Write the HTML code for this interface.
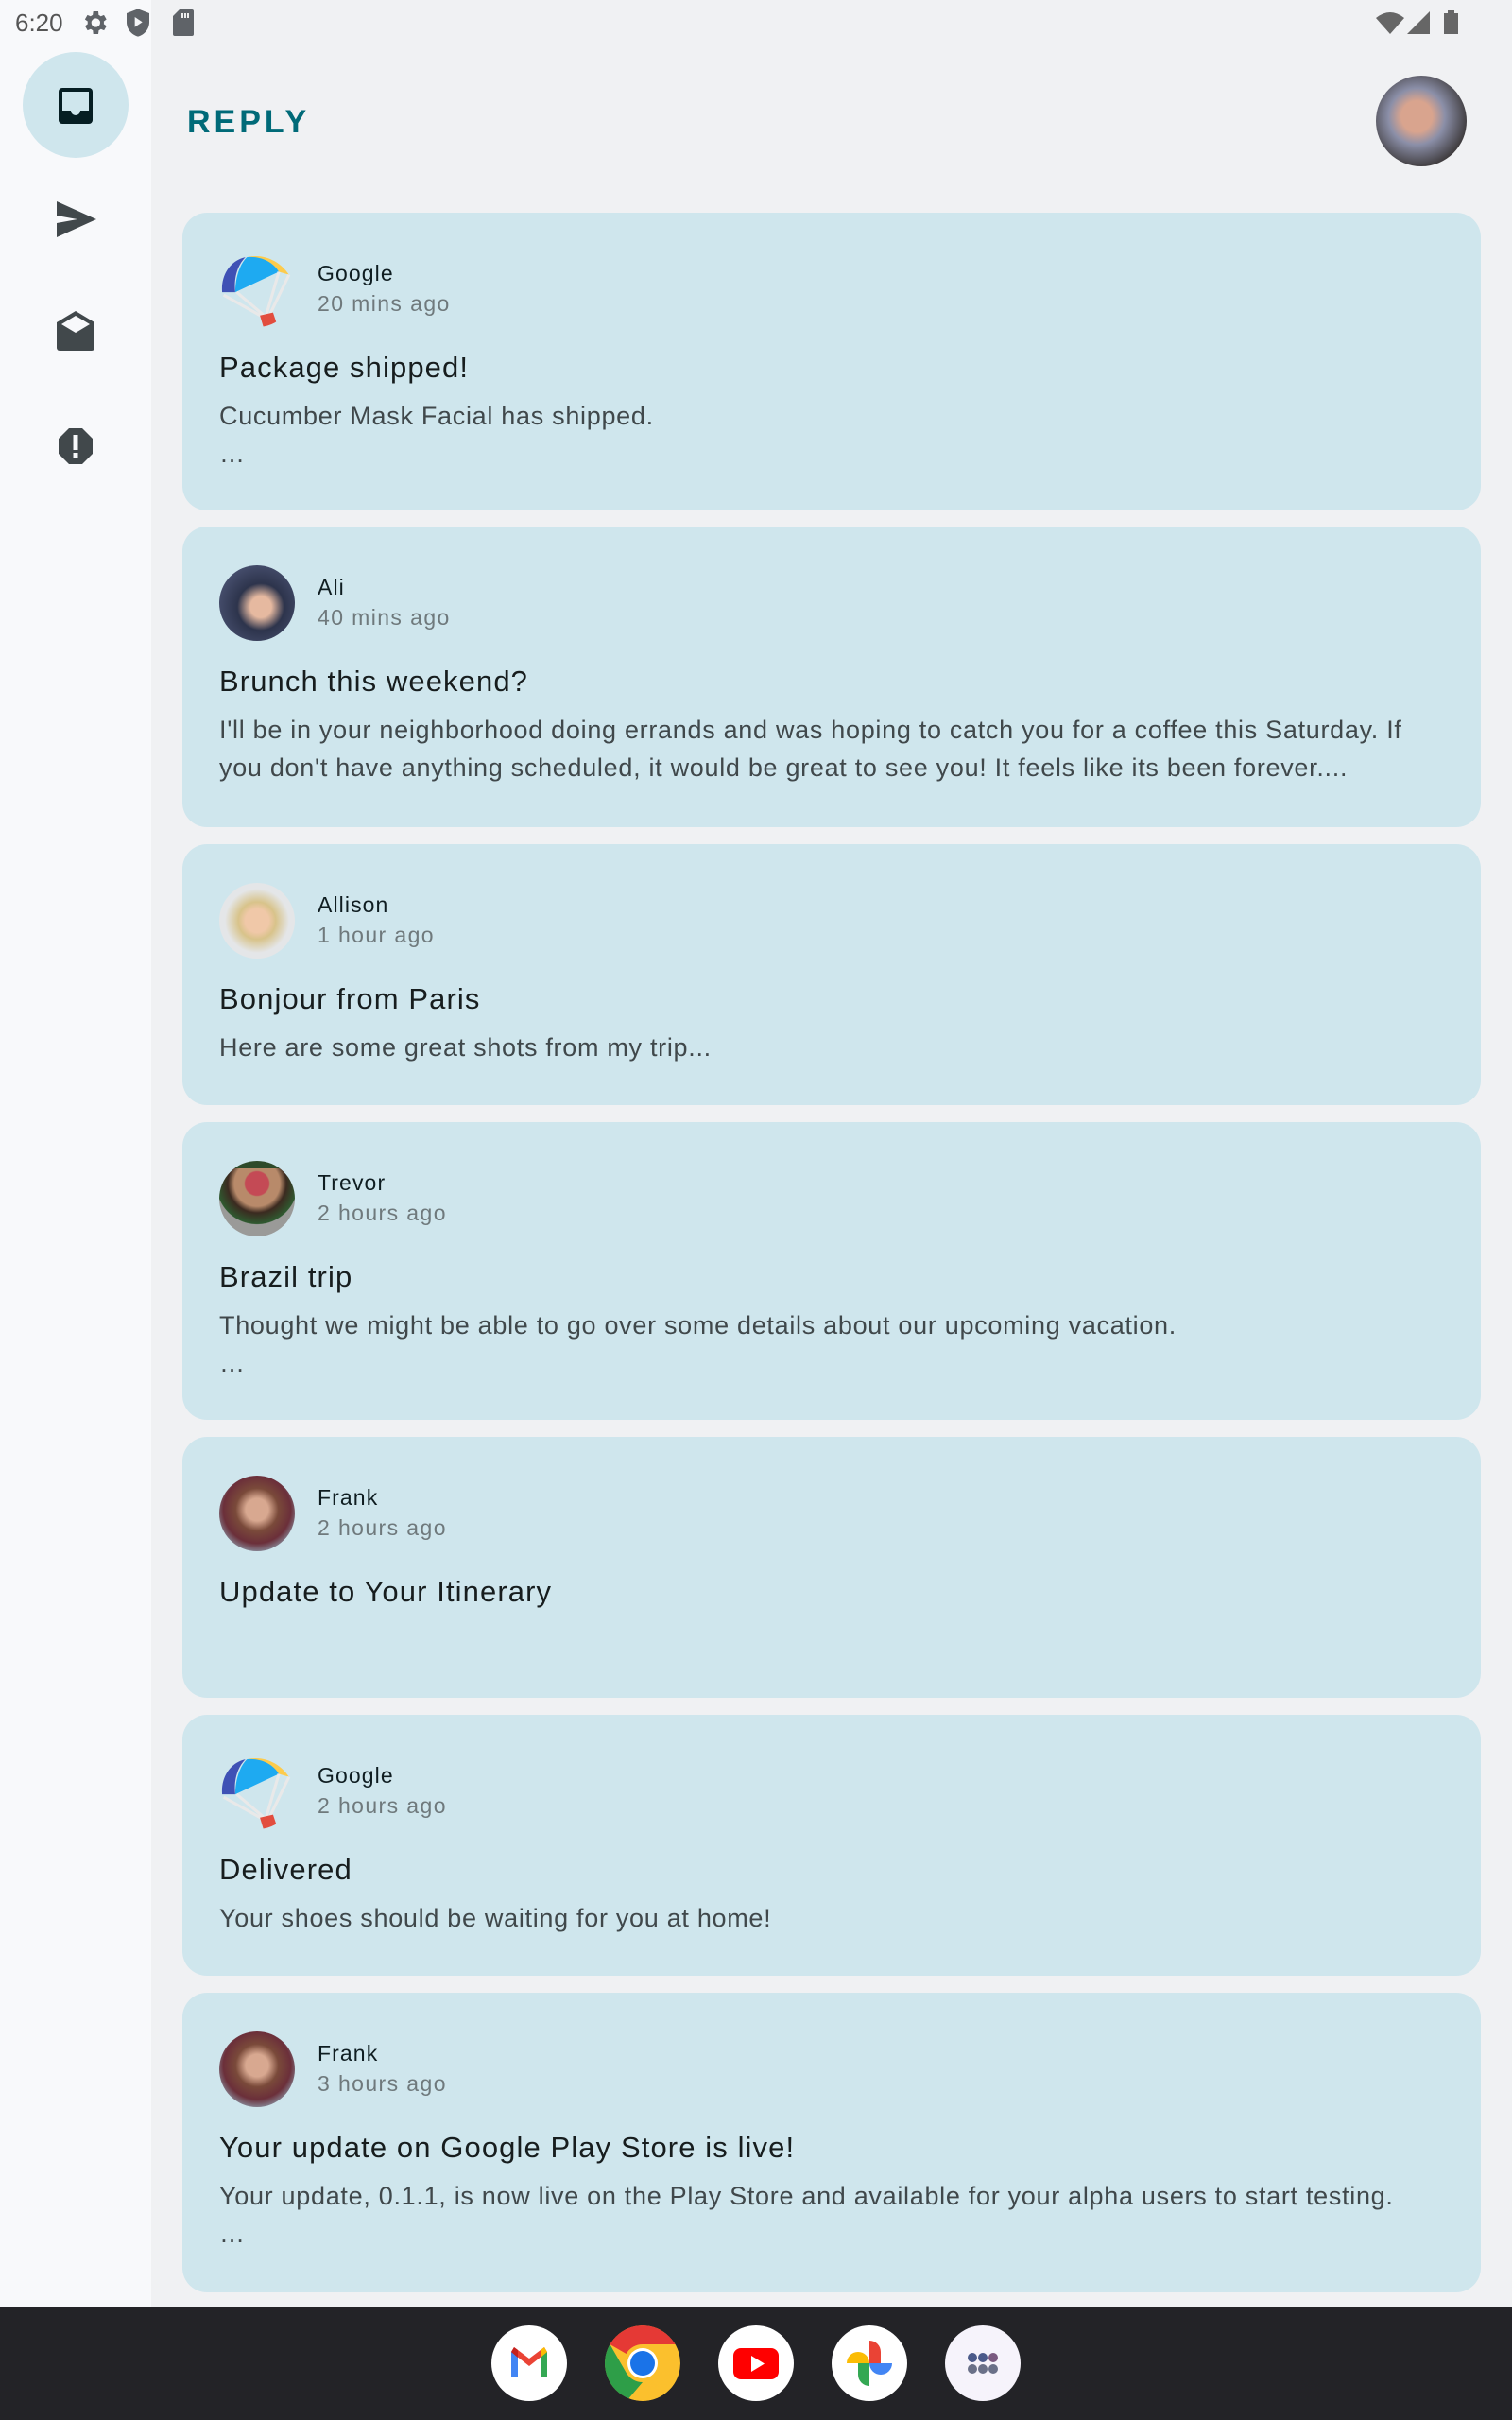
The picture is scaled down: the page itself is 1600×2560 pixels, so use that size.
<!DOCTYPE html>
<html><head><meta charset="utf-8">
<style>
*{margin:0;padding:0;box-sizing:border-box}
body{width:1600px;height:2560px;background:#f0f1f3;font-family:"Liberation Sans",sans-serif;position:relative;overflow:hidden}
.rail{position:absolute;left:0;top:0;width:160px;height:2440px;background:#f8f9fb}
.abs{position:absolute}
.card{position:absolute;left:193px;width:1374px;background:#cfe6ed;border-radius:26px}
.av{position:absolute;left:39px;top:41px;width:80px;height:80px;border-radius:50%;overflow:hidden}
.nm{position:absolute;left:143px;top:52px;font-size:23px;line-height:24px;color:#0f1d21;letter-spacing:1.1px}
.tm{position:absolute;left:143px;top:84px;font-size:23px;line-height:24px;color:#6f797c;letter-spacing:1.4px}
.sb{position:absolute;left:39px;top:148px;font-size:31px;line-height:31px;color:#171d1e;letter-spacing:1.1px;white-space:nowrap}
.bd{position:absolute;left:39px;top:195px;font-size:27px;line-height:40px;color:#40484b;white-space:nowrap;letter-spacing:0.7px}
.dock{position:absolute;left:0;top:2440px;width:1600px;height:120px;background:#232327}
.di{position:absolute;top:20px;width:80px;height:80px;border-radius:50%;background:#fff;overflow:hidden}
</style></head><body>
<div class="rail"></div>
<!-- status bar -->
<div class="abs" style="left:16px;top:9px;font-size:26px;color:#555;">6:20</div>
<svg class="abs" style="left:84px;top:8px" width="32" height="32" viewBox="0 0 24 24"><path fill="#5f6368" d="M19.4 13a7.5 7.5 0 0 0 0-2l2.1-1.6-2-3.5-2.5 1a7 7 0 0 0-1.7-1L15 3h-4l-.4 2.9a7 7 0 0 0-1.7 1l-2.5-1-2 3.5L6.6 11a7.5 7.5 0 0 0 0 2l-2.1 1.6 2 3.5 2.5-1a7 7 0 0 0 1.7 1L11 21h4l.4-2.9a7 7 0 0 0 1.7-1l2.5 1 2-3.5zM13 15.5a3.5 3.5 0 1 1 0-7 3.5 3.5 0 0 1 0 7z"/></svg>
<svg class="abs" style="left:132px;top:8px" width="28" height="32" viewBox="0 0 20 24"><path fill="#5f6368" d="M10 1 1 4.5v7c0 5.5 3.8 10 9 11.5 5.2-1.5 9-6 9-11.5v-7z"/><path fill="#f4f5f7" d="M7.5 7.5v8l6-4z"/></svg>
<svg class="abs" style="left:183px;top:10px" width="22" height="28" viewBox="0 0 22 28"><path fill="#5f6368" d="M7 0h13a2 2 0 0 1 2 2v24a2 2 0 0 1-2 2H2a2 2 0 0 1-2-2V7z"/><path fill="#eee" d="M9 4h2v5H9zM12 4h2v5h-2zM15 4h2v5h-2z"/></svg>
<svg class="abs" style="left:1456px;top:12px" width="30" height="24" viewBox="0 0 30 24"><path fill="#666" d="M0 7Q15-5 30 7L15 24z"/></svg>
<svg class="abs" style="left:1489px;top:12px" width="24" height="24" viewBox="0 0 24 24"><path fill="#666" d="M24 0v24H0z"/></svg>
<svg class="abs" style="left:1528px;top:11px" width="15" height="25" viewBox="0 0 15 25"><path fill="#666" d="M4 0h7v3h4v22H0V3h4z"/></svg>

<!-- nav rail -->
<div class="abs" style="left:24px;top:55px;width:112px;height:112px;border-radius:50%;background:#cfe6ed"></div>
<svg class="abs" style="left:62px;top:93px" width="36" height="38" viewBox="0 0 36 38"><rect x="0" y="0" width="36" height="38" rx="4" fill="#061e23"/><path fill="#cfe6ed" d="M4 4h28v20h-9a5 5 0 0 1-10 0H4z"/></svg>
<svg class="abs" style="left:60px;top:213px" width="42" height="38" viewBox="0 0 42 38"><path fill="#41484b" d="M0 0 42 19 0 38V23l22-4L0 15z"/></svg>
<svg class="abs" style="left:60px;top:329px" width="40" height="42" viewBox="0 0 40 42"><path fill="#41484b" d="M20 0 40 12v27a3 3 0 0 1-3 3H3a3 3 0 0 1-3-3V12z"/><path fill="#f8f9fb" d="M20 5 35 14 20 23 5 14z"/></svg>
<svg class="abs" style="left:62px;top:453px" width="36" height="38" viewBox="0 0 36 38"><path fill="#41484b" d="M11 0h14l11 11v16L25 38H11L0 27V11z"/><rect x="15.5" y="7" width="5" height="16" fill="#f8f9fb"/><rect x="15.5" y="26" width="5" height="5" fill="#f8f9fb"/></svg>

<!-- header -->
<div class="abs" style="left:198px;top:110px;font-size:34px;font-weight:bold;letter-spacing:4px;color:#006a78">REPLY</div>
<div class="abs" style="left:1456px;top:80px;width:96px;height:96px;border-radius:50%;background:radial-gradient(circle at 45% 45%,#d9a48e 0 22%,#8b8fa8 40%,#3a3636 75%)"></div>

<!-- cards -->
<div class="card" style="top:225px;height:315px">
 <div class="av" style="background:none"><svg width="80" height="80" viewBox="10 10 52 52"><path fill="#3f51b5" d="M12 38c-1-12 6-22 16-24-6 6-8 15-7 24z"/><path fill="#1eaaf1" d="M21 38c0-10 3-19 8-24 10-2 19 3 22 10z"/><path fill="#fdcb4c" d="M29 14c12-3 23 3 29 12l-7-2c-4-7-13-11-22-10z"/><path stroke="#e9e9e9" stroke-width="2" fill="none" d="M13 40 40 55M22 38 42 55M51 24 42 55M58 26 44 55"/><path fill="#e24d3e" d="M38 54l9-2 3 9-9 3z"/></svg></div>
 <div class="nm">Google</div><div class="tm">20 mins ago</div>
 <div class="sb">Package shipped!</div>
 <div class="bd">Cucumber Mask Facial has shipped.<br>…</div>
</div>
<div class="card" style="top:557px;height:318px">
 <div class="av" style="background:radial-gradient(circle at 55% 55%,#e6b9a0 0 18%,#2d344c 40%,#4a5272 80%)"></div>
 <div class="nm">Ali</div><div class="tm">40 mins ago</div>
 <div class="sb">Brunch this weekend?</div>
 <div class="bd">I'll be in your neighborhood doing errands and was hoping to catch you for a coffee this Saturday. If<br>you don't have anything scheduled, it would be great to see you! It feels like its been forever....</div>
</div>
<div class="card" style="top:893px;height:276px">
 <div class="av" style="background:radial-gradient(circle at 50% 50%,#f0c8a8 0 22%,#d8c38a 35%,#e4e6e8 60%)"></div>
 <div class="nm">Allison</div><div class="tm">1 hour ago</div>
 <div class="sb">Bonjour from Paris</div>
 <div class="bd">Here are some great shots from my trip...</div>
</div>
<div class="card" style="top:1187px;height:315px">
 <div class="av" style="background:linear-gradient(#2e4a2a 0 10%,transparent 10%),radial-gradient(circle at 50% 30%,#c44a55 0 18%,#b88a6a 20% 35%,#3b2a20 45%,#2f5a30 62%,#9a9a98 63%)"></div>
 <div class="nm">Trevor</div><div class="tm">2 hours ago</div>
 <div class="sb">Brazil trip</div>
 <div class="bd">Thought we might be able to go over some details about our upcoming vacation.<br>…</div>
</div>
<div class="card" style="top:1520px;height:276px">
 <div class="av" style="background:radial-gradient(circle at 50% 45%,#d8a890 0 20%,#7a4a3a 38%,#6b2f3a 60%,#8ea0b0 80%)"></div>
 <div class="nm">Frank</div><div class="tm">2 hours ago</div>
 <div class="sb">Update to Your Itinerary</div>
</div>
<div class="card" style="top:1814px;height:276px">
 <div class="av" style="background:none"><svg width="80" height="80" viewBox="10 10 52 52"><path fill="#3f51b5" d="M12 38c-1-12 6-22 16-24-6 6-8 15-7 24z"/><path fill="#1eaaf1" d="M21 38c0-10 3-19 8-24 10-2 19 3 22 10z"/><path fill="#fdcb4c" d="M29 14c12-3 23 3 29 12l-7-2c-4-7-13-11-22-10z"/><path stroke="#e9e9e9" stroke-width="2" fill="none" d="M13 40 40 55M22 38 42 55M51 24 42 55M58 26 44 55"/><path fill="#e24d3e" d="M38 54l9-2 3 9-9 3z"/></svg></div>
 <div class="nm">Google</div><div class="tm">2 hours ago</div>
 <div class="sb">Delivered</div>
 <div class="bd">Your shoes should be waiting for you at home!</div>
</div>
<div class="card" style="top:2108px;height:317px">
 <div class="av" style="background:radial-gradient(circle at 50% 45%,#d8a890 0 20%,#7a4a3a 38%,#6b2f3a 60%,#8ea0b0 80%)"></div>
 <div class="nm">Frank</div><div class="tm">3 hours ago</div>
 <div class="sb">Your update on Google Play Store is live!</div>
 <div class="bd">Your update, 0.1.1, is now live on the Play Store and available for your alpha users to start testing.<br>…</div>
</div>

<!-- dock -->
<div class="dock">
 <div class="di" style="left:520px"><svg width="80" height="80" viewBox="0 0 80 80"><path fill="#4285f4" d="M21 28h7v27h-7z"/><path fill="#34a853" d="M52 28h7v27h-7z"/><path fill="#ea4335" d="M21 28l19 15 19-15-3-5-16 12-16-12z"/><path fill="#c5221f" d="M21 28l7 6v-8l-4-3z"/><path fill="#fbbc04" d="M59 28l-7 6v-8l4-3z"/></svg></div>
 <div class="di" style="left:640px;background:none"><svg width="80" height="80" viewBox="0 0 80 80"><circle cx="40" cy="40" r="40" fill="#fbc02d"/><path fill="#e53935" d="M40 0a40 40 0 0 1 34.6 20H40a20 20 0 0 0-17.3 10L5.4 20A40 40 0 0 1 40 0z"/><path fill="#2e9e48" d="M5.4 20l17.3 30A20 20 0 0 0 40 60L23 80A40 40 0 0 1 5.4 20z"/><circle cx="40" cy="40" r="16" fill="#fff"/><circle cx="40" cy="40" r="13" fill="#1a73e8"/></svg></div>
 <div class="di" style="left:760px"><svg width="80" height="80" viewBox="0 0 80 80"><rect x="16" y="24" width="48" height="33" rx="8" fill="#f00"/><path fill="#fff" d="M35 32v17l14-8.5z"/></svg></div>
 <div class="di" style="left:880px"><svg width="80" height="80" viewBox="0 0 80 80"><path fill="#ea4335" d="M40 16a12 12 0 0 1 12 12v12H40z"/><path fill="#4285f4" d="M40 40h24a12 12 0 0 1-24 0z"/><path fill="#34a853" d="M40 40v24a12 12 0 0 1-12-12V40z"/><path fill="#fbbc04" d="M40 40H16a12 12 0 0 1 24 0z"/></svg></div>
 <div class="di" style="left:1000px;background:#f6f3fb"><svg width="80" height="80" viewBox="0 0 80 80"><g fill="#4b5a8a"><circle cx="29" cy="34" r="5"/><circle cx="40" cy="34" r="5"/></g><circle cx="51" cy="34" r="5" fill="#7a5a80"/><g fill="#6a7088"><circle cx="29" cy="46" r="5"/><circle cx="40" cy="46" r="5"/><circle cx="51" cy="46" r="5"/></g></svg></div>
</div>
</body></html>
